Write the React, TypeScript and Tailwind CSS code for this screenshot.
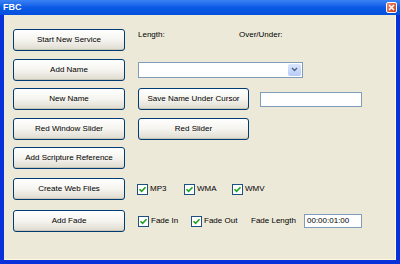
import React from 'react';

const font = { fontFamily: '"Liberation Sans", Arial, sans-serif' };

const XpButton: React.FC<{ label: string; className?: string }> = ({ label, className }) => (
  <button
    className={
      "h-[22px] shrink-0 rounded-[3px] border border-[#003c74] bg-gradient-to-b from-[#ffffff] via-[#f5f4ef] to-[#dedbcf] text-[8px] text-black shadow-[inset_0_-1px_0_#c9c5b5] " +
      (className ?? "w-[112px]")
    }
  >
    {label}
  </button>
);

const Check: React.FC<{ label: string; className?: string }> = ({ label, className }) => (
  <label className={"flex shrink-0 items-center gap-[2px] text-[8px] text-black " + (className ?? "")}>
    <span className="flex h-[11px] w-[11px] items-center justify-center border border-[#1c5180] bg-white">
      <svg width="9" height="9" viewBox="0 0 9 9">
        <path d="M1.5 4.2 L3.6 6.4 L7.5 2.2" fill="none" stroke="#21a121" strokeWidth="1.6" />
      </svg>
    </span>
    {label}
  </label>
);

export default function App() {
  return (
    <div style={font} className="flex h-[264px] w-[400px] flex-col bg-[#0831d9]">
      {/* Title bar */}
      <div className="flex h-[15px] shrink-0 items-center justify-between bg-gradient-to-b from-[#3b82f5] via-[#0a5ae6] to-[#0550dc] px-[3px]">
        <span className="text-[9px] font-bold leading-none text-white">FBC</span>
        <span className="flex h-[11px] w-[11px] items-center justify-center rounded-[2px] border border-white bg-gradient-to-br from-[#e98a6c] to-[#c93a14]">
          <svg width="7" height="7" viewBox="0 0 7 7">
            <path d="M1 1 L6 6 M6 1 L1 6" stroke="white" strokeWidth="1.6" />
          </svg>
        </span>
      </div>

      {/* Client area */}
      <div className="mx-[4px] mb-[4px] flex flex-1 flex-col gap-[7.5px] border-b border-r border-[#fff8dc] bg-[#ece9d8] pl-[9px] pt-[14px]">
        <div className="flex items-start gap-[13px]">
          <XpButton label="Start New Service" />
          <span className="w-[88px] text-[8px] text-black">Length:</span>
          <span className="text-[8px] text-black">Over/Under:</span>
        </div>

        <div className="flex items-center gap-[13px]">
          <XpButton label="Add Name" />
          <div className="flex h-[16px] w-[165px] items-center justify-end border border-[#7f9db9] bg-white p-[1px]">
            <span className="flex h-[12px] w-[13px] items-center justify-center rounded-[2px] bg-gradient-to-b from-[#dbe6fd] to-[#b6cbf7]">
              <svg width="7" height="5" viewBox="0 0 7 5">
                <path d="M1 1 L3.5 3.5 L6 1" fill="none" stroke="#4d6185" strokeWidth="1.4" />
              </svg>
            </span>
          </div>
        </div>

        <div className="flex items-center gap-[11px]">
          <XpButton label="New Name" />
          <XpButton label="Save Name Under Cursor" className="ml-[2px] w-[111px]" />
          <div className="h-[15px] w-[102px] border border-[#7f9db9] bg-white" />
        </div>

        <div className="flex items-center gap-[13px]">
          <XpButton label="Red Window Slider" />
          <XpButton label="Red Slider" className="w-[111px]" />
        </div>

        <div className="flex items-center">
          <XpButton label="Add Scripture Reference" />
        </div>

        <div className="mt-[1.5px] flex items-center gap-[12px]">
          <XpButton label="Create Web Files" />
          <div className="flex items-center">
            <Check label="MP3" className="w-[47px]" />
            <Check label="WMA" className="w-[48px]" />
            <Check label="WMV" />
          </div>
        </div>

        <div className="mt-[2.5px] flex items-center gap-[13px]">
          <XpButton label="Add Fade" />
          <div className="flex items-center">
            <Check label="Fade In" className="w-[53px]" />
            <Check label="Fade Out" className="w-[60px]" />
            <span className="w-[53px] text-[8px] text-black">Fade Length</span>
          </div>
          <div className="-ml-[13px] flex h-[14px] w-[58px] items-center border border-[#7f9db9] bg-white px-[2px] text-[8px] text-black">
            00:00:01:00
          </div>
        </div>
      </div>
    </div>
  );
}
